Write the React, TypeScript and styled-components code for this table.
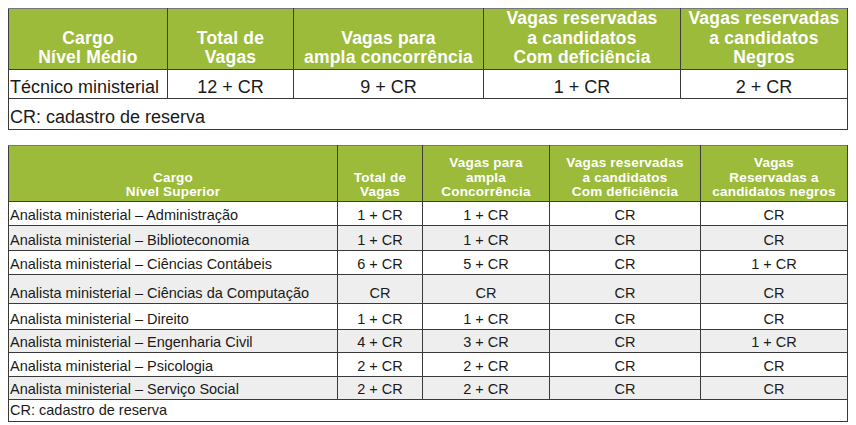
import React from "react";
import styled, { createGlobalStyle } from "styled-components";

const Global = createGlobalStyle`
  html, body { margin: 0; padding: 0; background: #ffffff; }
  body { font-family: "Liberation Sans", Arial, sans-serif; color: #111; }
`;

const Page = styled.div`
  display: flex;
  flex-direction: column;
  gap: 15px;
  padding: 8px 0 0 8px;
  width: 839px;
`;

const Table = styled.table`
  border-collapse: collapse;
  table-layout: fixed;
  width: 839px;
  border: 1px solid #555;
`;

const HeadCell = styled.th<{ $size: number; $lh: number }>`
  background: #9cbb3b;
  color: #ffffff;
  font-weight: bold;
  font-size: ${(p) => p.$size}px;
  line-height: ${(p) => p.$lh}px;
  text-align: center;
  vertical-align: bottom;
  padding: 0 1px 1px;
  border: 1px solid #3d3d3d;
  border-top-color: #777;
  letter-spacing: 0.2px;
`;

const Row = styled.tr<{ $h: number; $alt?: boolean }>`
  height: ${(p) => p.$h}px;
  background: ${(p) => (p.$alt ? "#eeeeee" : "#ffffff")};
`;

const Cell = styled.td<{ $size: number; $left?: boolean }>`
  font-size: ${(p) => p.$size}px;
  line-height: 1;
  text-align: ${(p) => (p.$left ? "left" : "center")};
  vertical-align: bottom;
  padding: 0 1px 2px ${(p) => (p.$left ? "1px" : "1px")};
  border: 1px solid #3a3a3a;
  white-space: nowrap;
  overflow: hidden;
  color: #1a1a1a;
`;

const Note = styled.td<{ $size: number }>`
  font-size: ${(p) => p.$size}px;
  line-height: 1;
  vertical-align: bottom;
  padding: 0 1px 3px;
  border: 1px solid #3a3a3a;
  color: #1a1a1a;
`;

const topCols = [159, 126, 190, 197, 167];
const bottomCols = [329, 85, 127, 151, 147];

const bottomRows: { cargo: string; v: string[]; h: number }[] = [
  { cargo: "Analista ministerial – Administração", v: ["1 + CR", "1 + CR", "CR", "CR"], h: 24 },
  { cargo: "Analista ministerial – Biblioteconomia", v: ["1 + CR", "1 + CR", "CR", "CR"], h: 25 },
  { cargo: "Analista ministerial – Ciências Contábeis", v: ["6 + CR", "5 + CR", "CR", "1 + CR"], h: 24 },
  { cargo: "Analista ministerial – Ciências da Computação", v: ["CR", "CR", "CR", "CR"], h: 29 },
  { cargo: "Analista ministerial – Direito", v: ["1 + CR", "1 + CR", "CR", "CR"], h: 26 },
  { cargo: "Analista ministerial – Engenharia Civil", v: ["4 + CR", "3 + CR", "CR", "1 + CR"], h: 23 },
  { cargo: "Analista ministerial – Psicologia", v: ["2 + CR", "2 + CR", "CR", "CR"], h: 24 },
  { cargo: "Analista ministerial – Serviço Social", v: ["2 + CR", "2 + CR", "CR", "CR"], h: 23 },
];

const L = ({ lines }: { lines: string[] }) => (
  <>
    {lines.map((l, i) => (
      <React.Fragment key={i}>
        {i > 0 && <br />}
        {l}
      </React.Fragment>
    ))}
  </>
);

export default function App() {
  const topHead = [
    ["Cargo", "Nível Médio"],
    ["Total de", "Vagas"],
    ["Vagas para", "ampla concorrência"],
    ["Vagas reservadas", "a candidatos", "Com deficiência"],
    ["Vagas reservadas", "a candidatos", "Negros"],
  ];
  const bottomHead = [
    ["Cargo", "Nível Superior"],
    ["Total de", "Vagas"],
    ["Vagas para", "ampla", "Concorrência"],
    ["Vagas reservadas", "a candidatos", "Com deficiência"],
    ["Vagas", "Reservadas a", "candidatos negros"],
  ];
  return (
    <>
      <Global />
      <Page>
        <Table>
          <colgroup>
            {topCols.map((w, i) => (
              <col key={i} style={{ width: w }} />
            ))}
          </colgroup>
          <thead>
            <Row $h={60}>
              {topHead.map((h, i) => (
                <HeadCell key={i} $size={17.5} $lh={19.5}>
                  <L lines={h} />
                </HeadCell>
              ))}
            </Row>
          </thead>
          <tbody>
            <Row $h={29}>
              <Cell $size={18} $left>Técnico ministerial</Cell>
              <Cell $size={18}>12 + CR</Cell>
              <Cell $size={18}>9 + CR</Cell>
              <Cell $size={18}>1 + CR</Cell>
              <Cell $size={18}>2 + CR</Cell>
            </Row>
            <Row $h={31}>
              <Note $size={18} colSpan={5}>CR: cadastro de reserva</Note>
            </Row>
          </tbody>
        </Table>

        <Table>
          <colgroup>
            {bottomCols.map((w, i) => (
              <col key={i} style={{ width: w }} />
            ))}
          </colgroup>
          <thead>
            <Row $h={56}>
              {bottomHead.map((h, i) => (
                <HeadCell key={i} $size={13.5} $lh={14.5}>
                  <L lines={h} />
                </HeadCell>
              ))}
            </Row>
          </thead>
          <tbody>
            {bottomRows.map((r, i) => (
              <Row key={i} $h={r.h} $alt={i % 2 === 1}>
                <Cell $size={14.5} $left>{r.cargo}</Cell>
                {r.v.map((v, j) => (
                  <Cell key={j} $size={14.5}>{v}</Cell>
                ))}
              </Row>
            ))}
            <Row $h={22}>
              <Note $size={14.5} colSpan={5}>CR: cadastro de reserva</Note>
            </Row>
          </tbody>
        </Table>
      </Page>
    </>
  );
}
